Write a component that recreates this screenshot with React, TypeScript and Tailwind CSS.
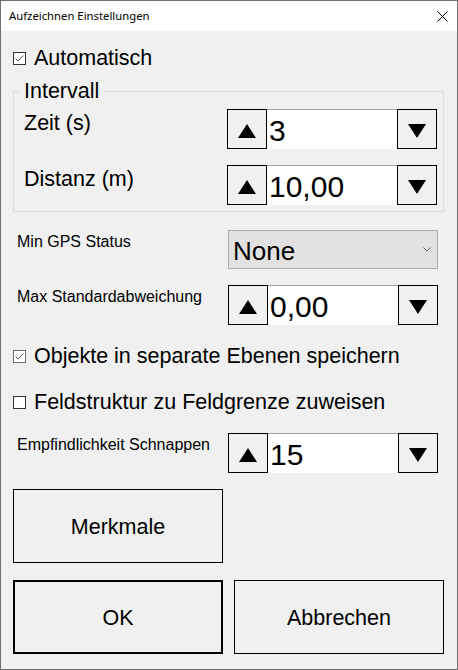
import React from 'react';

const Tri = ({ down }: { down?: boolean }) => (
  <svg width="18" height="14" viewBox="0 0 18 14">
    <polygon points={down ? '0,0 18,0 9,14' : '9,0 18,14 0,14'} fill="#000" />
  </svg>
);

const Spinner = ({ value }: { value: string }) => (
  <div className="flex h-[40px] w-[210px] mr-[6px] shrink-0">
    <div className="w-[40px] h-full border border-black bg-[#f0f0f0] flex items-center justify-center pt-[4px]">
      <Tri />
    </div>
    <div className="flex-1 h-full bg-white border-t border-[#a0a0a0] flex items-center pl-[2px] pt-[3px] text-[30px] leading-none">
      {value}
    </div>
    <div className="w-[40px] h-full border border-black bg-[#f0f0f0] flex items-center justify-center pt-[3px]">
      <Tri down />
    </div>
  </div>
);

const Check = ({ checked, label, muted }: { checked?: boolean; label: string; muted?: boolean }) => (
  <div className="flex items-center h-[25px]">
    <div
      className={`w-[13px] h-[13px] bg-white border flex items-center justify-center ${
        muted ? 'border-[#6d6d6d]' : 'border-[#333]'
      }`}
    >
      {checked && (
        <svg width="11" height="11" viewBox="0 0 11 11" fill="none" stroke="#555" strokeWidth="1">
          <polyline points="1.5,5.5 4,8 9.5,2.5" />
        </svg>
      )}
    </div>
    <span className="ml-[8px] text-[21.5px] leading-[25px]">{label}</span>
  </div>
);

const App: React.FC = () => {
  return (
    <div className="w-[458px] h-[670px] bg-[#f0f0f0] border border-[#707070] flex flex-col overflow-hidden text-black font-['Liberation_Sans',Arial,sans-serif]">
      {/* title bar */}
      <div className="h-[30px] bg-white flex items-center justify-between pl-[8px] pr-[9px] shrink-0">
        <span className="text-[11.3px] font-['Noto_Sans',sans-serif]">Aufzeichnen Einstellungen</span>
        <svg width="11" height="11" viewBox="0 0 11 11" stroke="#000" strokeWidth="1">
          <line x1="0.5" y1="0.5" x2="10.5" y2="10.5" />
          <line x1="10.5" y1="0.5" x2="0.5" y2="10.5" />
        </svg>
      </div>

      <div className="flex flex-col pl-[12px] pr-[13px]">
        <div className="mt-[15px]">
          <Check checked label="Automatisch" />
        </div>

        <fieldset className="mt-[9px] border border-[#dcdcdc] pl-[10px] pt-[7px] pb-[6px] pr-0">
          <legend className="ml-[-4px] px-[4px] text-[21.5px] leading-[22px]">Intervall</legend>
          <div className="flex items-start justify-between h-[40px]">
            <span className="pt-[2px] text-[21.5px] leading-[25px]">Zeit (s)</span>
            <Spinner value="3" />
          </div>
          <div className="flex items-start justify-between h-[40px] mt-[16px]">
            <span className="pt-[2px] text-[21.5px] leading-[25px]">Distanz (m)</span>
            <Spinner value="10,00" />
          </div>
        </fieldset>

        <div className="flex items-start justify-between mt-[18px] h-[39px]">
          <span className="pl-[4px] pt-[3px] text-[16px] leading-[18px]">Min GPS Status</span>
          <div className="w-[210px] h-[39px] mr-[6px] bg-[#e1e1e1] border border-[#adadad] flex items-center justify-between pl-[4px] pr-[6px]">
            <span className="text-[26px] leading-none pt-[3px]">None</span>
            <svg width="8" height="5" viewBox="0 0 8 5" fill="none" stroke="#606060" strokeWidth="1">
              <polyline points="0.5,0.5 4,4 7.5,0.5" />
            </svg>
          </div>
        </div>

        <div className="flex items-start justify-between mt-[16px] h-[40px]">
          <span className="pl-[4px] pt-[3px] text-[16px] leading-[18px]">Max Standardabweichung</span>
          <Spinner value="0,00" />
        </div>

        <div className="mt-[19px]">
          <Check checked muted label="Objekte in separate Ebenen speichern" />
        </div>
        <div className="mt-[21px]">
          <Check label="Feldstruktur zu Feldgrenze zuweisen" />
        </div>

        <div className="flex items-start justify-between mt-[18px] h-[40px]">
          <span className="pl-[4px] pt-[3px] text-[16px] leading-[18px]">Empfindlichkeit Schnappen</span>
          <Spinner value="15" />
        </div>

        <div className="mt-[16px] w-[210px] h-[74px] border border-black flex items-center justify-center pt-[3px] text-[21.5px]">
          Merkmale
        </div>

        <div className="flex gap-[11px] mt-[17px]">
          <div className="w-[210px] h-[74px] border-2 border-black flex items-center justify-center pt-[3px] text-[21.5px]">
            OK
          </div>
          <div className="w-[210px] h-[74px] border border-black flex items-center justify-center pt-[3px] text-[21.5px]">
            Abbrechen
          </div>
        </div>
      </div>
    </div>
  );
};

export default App;
